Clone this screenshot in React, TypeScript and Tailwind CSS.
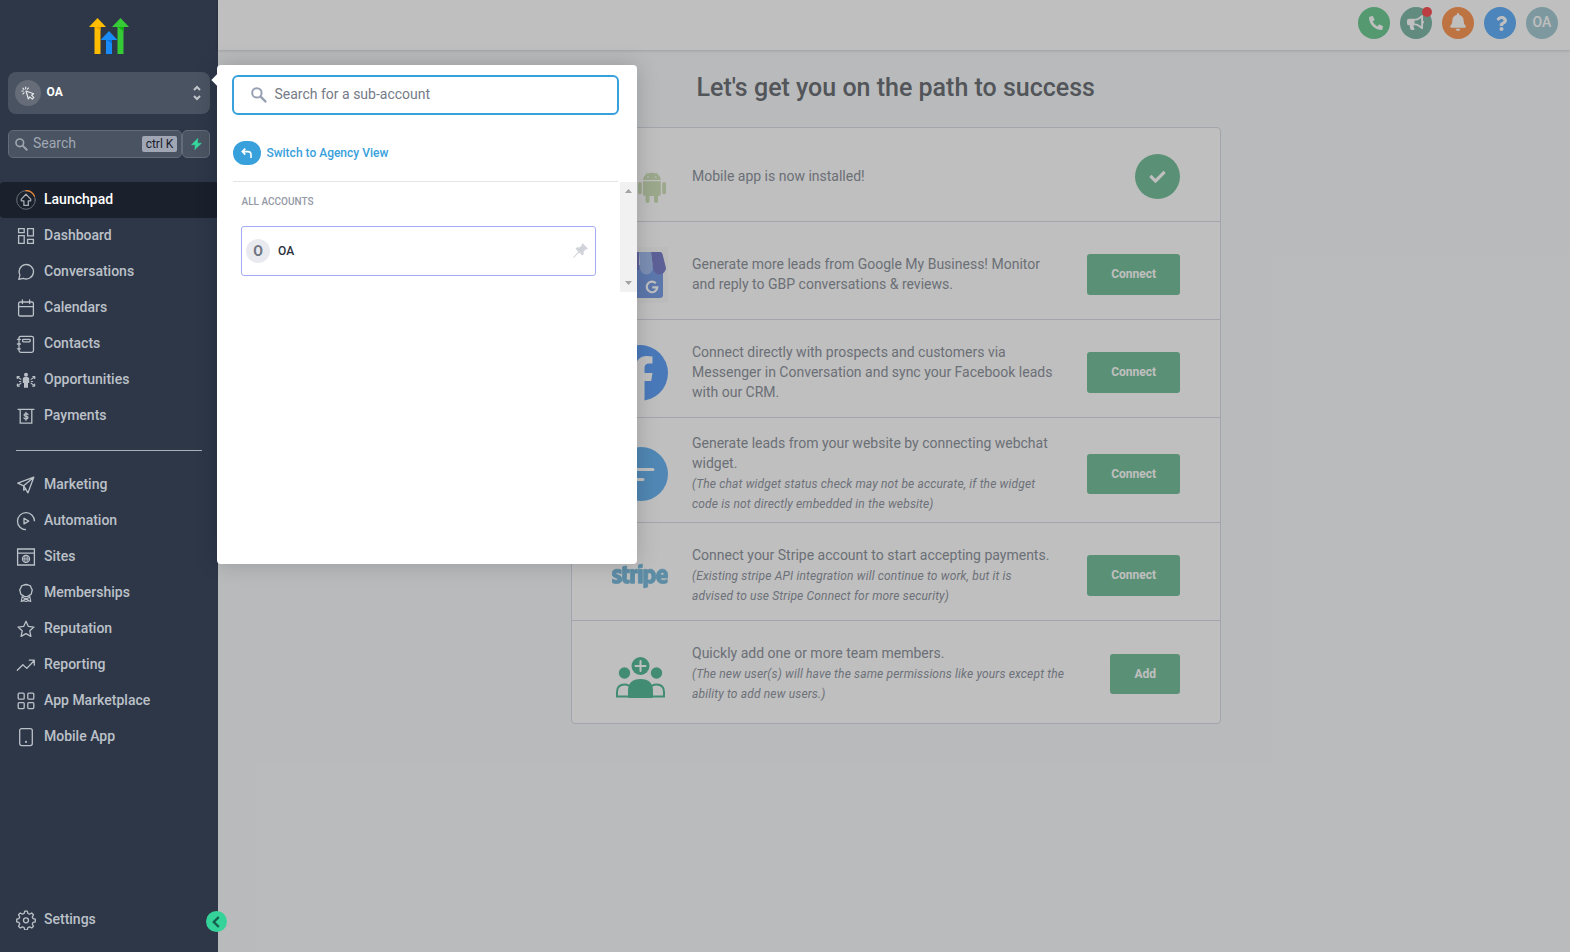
import React from "react";
import {
  FaPhoneAlt,
  FaBell,
  FaBullhorn,
  FaQuestion,
  FaCheck,
  FaStripe,
  FaApple,
} from "react-icons/fa";

const stroke = {
  fill: "none",
  stroke: "currentColor",
  strokeWidth: 1.3,
  strokeLinecap: "round" as const,
  strokeLinejoin: "round" as const,
};

function Icon({ children }: { children: React.ReactNode }) {
  return (
    <svg className="block h-5 w-5 shrink-0" viewBox="0 0 20 20" {...stroke}>
      {children}
    </svg>
  );
}

const primary = [
  {
    label: "Launchpad",
    icon: (
      <Icon>
        <circle cx="10" cy="10" r="9.3" stroke="#6b7078" strokeWidth="1" />
        <path d="M10 .7a9.3 9.3 0 0 1 8.4 5.4" stroke="#ed8936" />
        <path d="M10 4.3l4.7 4.8v1.7h-2.4v4.6H7.9v-4.6H5.3V9.1z" />
      </Icon>
    ),
  },
  {
    label: "Dashboard",
    icon: (
      <Icon>
        <g strokeLinejoin="miter">
          <path d="M2.600 2.600h5.600v4H2.600zM2.600 9.600h5.600v7.800H2.600zM11.600 2.600h5.800v7.200h-5.800zM11.600 13.300h5.800v4.100h-5.800z" />
        </g>
      </Icon>
    ),
  },
  {
    label: "Conversations",
    icon: (
      <Icon>
        <path d="M2.800 17.400l1.100-4.300a7.200 7.200 0 1 1 3.400 3.200z" />
      </Icon>
    ),
  },
  {
    label: "Calendars",
    icon: (
      <Icon>
        <rect x="2.600" y="4" width="14.800" height="14" rx="1.600" />
        <path d="M2.600 8.600h14.800M6.400 2v3.600M13.600 2v3.600" />
      </Icon>
    ),
  },
  {
    label: "Contacts",
    icon: (
      <Icon>
        <rect x="3" y="2.300" width="14.500" height="16" rx="1.800" />
        <rect x="6.600" y="5.400" width="7.600" height="2.400" rx=".8" />
        <path d="M1.400 5.300h3M1.400 10h3M1.400 14.800h3" />
      </Icon>
    ),
  },
  {
    label: "Opportunities",
    icon: (
      <Icon>
        <circle cx="10" cy="4.700" r="2" fill="currentColor" stroke="none" />
        <path
          d="M6.800 8.800c0-1.200.9-1.700 3.200-1.700s3.200.5 3.200 1.700v4.200h-1.200v4.700H8v-4.700H6.800z"
          fill="currentColor"
          stroke="none"
        />
        <path d="M4.900 9.300L2 7.600M4.700 11.500H3.400M4.900 13.200l-2.900 2.200M15.100 9.300L18 7.600M15.300 11.500h1.300M15.100 13.200l2.900 2.200" strokeWidth="1.100" />
        <path d="M1.300 8.300V6.700h1.800M1.500 14.300v1.800h1.800M18.700 8.300V6.700h-1.800M18.500 14.300v1.800h-1.800" strokeWidth="1.400" />
      </Icon>
    ),
  },
  {
    label: "Payments",
    icon: (
      <Icon>
        <path d="M2 3.300h16M4.200 3.500v13.700h11.600V3.500" strokeLinejoin="miter" />
        <path d="M12 8.600c-.4-.7-1.100-1-2-1-1 0-1.900.5-1.900 1.300 0 1.900 3.900.8 3.900 2.700 0 .8-.9 1.400-2 1.400-.9 0-1.700-.4-2-1.100M10 6.300v8" />
      </Icon>
    ),
  },
];

const secondary = [
  {
    label: "Marketing",
    icon: (
      <Icon>
        <path d="M17.800 2.200L1.800 8.200l5.900 2.600 4.300 7zM17.800 2.200L7.700 10.800v4.400l2.100-1.400" />
      </Icon>
    ),
  },
  {
    label: "Automation",
    icon: (
      <Icon>
        <path d="M18.500 10.300a8.500 8.500 0 1 0-8.500 8.400" strokeLinecap="butt" />
        <path d="M8 7.300v5.600l4.700-2.800z" />
      </Icon>
    ),
  },
  {
    label: "Sites",
    icon: (
      <Icon>
        <g strokeLinejoin="miter">
          <path d="M1.600 2h16.800v16H1.600zM1.600 6.100h16.800" />
        </g>
        <circle cx="10" cy="11.900" r="3.500" />
        <path d="M6.500 11.900h7M10 8.400v7M8.300 9.200v5.400M11.700 9.200v5.400" strokeWidth=".8" />
      </Icon>
    ),
  },
  {
    label: "Memberships",
    icon: (
      <Icon>
        <path d="M10 1.500l2.200.5 2.200.8.700 2.100 1.200 1.900-.6 2.200-.5 2.200-1.900 1.200-1.500 1-1.800.3-1.800-.3-1.500-1-1.900-1.200-.5-2.200-.6-2.200 1.200-1.900.7-2.100L7.800 2z" />
        <path d="M6.300 12.800l-1.100 5.700 2.600-.8 2.200.8 2.200-.8 2.600.8-1.100-5.700M6.300 14.300l6.900 3.200M13.700 14.300l-6.900 3.200" strokeWidth="1.100" />
      </Icon>
    ),
  },
  {
    label: "Reputation",
    icon: (
      <Icon>
        <path d="M10 2.300l2.350 5.100 5.600.65-4.150 3.800 1.100 5.500L10 14.600l-4.900 2.750 1.100-5.500-4.150-3.800 5.600-.65z" />
      </Icon>
    ),
  },
  {
    label: "Reporting",
    icon: (
      <Icon>
        <path d="M1.300 15.300l5.600-5.600 3.900 3.700 7.500-7.900M13.300 5.200h5v5" />
      </Icon>
    ),
  },
  {
    label: "App Marketplace",
    icon: (
      <Icon>
        <rect x="2.200" y="2.200" width="6" height="6" rx="1" />
        <rect x="11.800" y="2.200" width="6" height="6" rx="1" />
        <rect x="2.200" y="11.600" width="6" height="6" rx="1" />
        <rect x="11.800" y="11.600" width="6" height="6" rx="1" />
      </Icon>
    ),
  },
  {
    label: "Mobile App",
    icon: (
      <Icon>
        <rect x="3.700" y="1.600" width="12.600" height="17" rx="2" />
        <path d="M10 14.700v.3" strokeWidth="2" />
      </Icon>
    ),
  },
];

function NavItem({ label, icon, active }: { label: string; icon: React.ReactNode; active?: boolean }) {
  return (
    <a
      className={
        active
          ? "flex h-9 items-center gap-2 rounded bg-[#1a202c] pl-4 text-sm font-medium text-white"
          : "flex h-9 items-center gap-2 pl-4 text-sm font-medium text-[#bcc1c8]"
      }
    >
      <span className={active ? "text-[#a9adb3]" : "text-[#bcc1c8]"}>{icon}</span>
      <span className="-mt-0.5">{label}</span>
    </a>
  );
}

function Magnifier({ className }: { className: string }) {
  return (
    <svg className={className} viewBox="0 0 16 16" fill="none" stroke="currentColor" strokeWidth="2">
      <circle cx="5.900" cy="5.900" r="4.700" />
      <path d="M9.400 9.400l5.700 5.700" strokeWidth="2.300" />
    </svg>
  );
}

function Sidebar() {
  return (
    <aside className="flex h-full w-[218px] shrink-0 flex-col bg-[#2d3748]">
      <svg className="ml-[89px] mt-[18px] block h-9 w-10" viewBox="0 0 40 36">
        <path d="M5.500 8h6v28h-6z" fill="#ffbc00" />
        <path d="M28.500 8h6v28h-6z" fill="#37ca37" />
        <path d="M17 21h6v15h-6z" fill="#188bf6" />
        <path d="M5.500 8.500h6v4z" fill="#e8a302" />
        <path d="M28.500 8.500h6v5z" fill="#10b210" />
        <path d="M17 21.500h6v4z" fill="#0870df" />
        <path d="M8.500 0l8.500 9H0z" fill="#ffbc00" />
        <path d="M31.500 0l8.500 9H23z" fill="#37ca37" />
        <path d="M20 13l8.500 9h-17z" fill="#188bf6" />
      </svg>

      <div className="ml-2 mt-[18px] flex h-[42px] w-[202px] items-center rounded-lg bg-[#4a5361] pl-[7px] pr-[9px]">
        <span className="flex h-[26px] w-[26px] items-center justify-center rounded-full bg-[#666d78] text-[#e6e8ea]">
          <svg className="h-3.5 w-3.5" viewBox="0 0 14 14" fill="none" stroke="currentColor" strokeWidth="1.200" strokeLinejoin="round" strokeLinecap="round">
            <path d="M5 5l7.600 2.700-2 1.500 2.200 2.200-1.500 1.700-2.500-2.200-1.500 2z" />
            <path d="M4.700 2.800V1.200M2.900 3.300l-1-1.200M2.300 5H.8M3 6.800L2 7.900M6.500 3.200l.9-1.200" />
          </svg>
        </span>
        <span className="-mt-0.5 ml-[5.5px] text-xs font-bold text-white">OA</span>
        <svg className="ml-auto h-4 w-2" viewBox="0 0 8 16" fill="none" stroke="#c3c7cc" strokeWidth="2">
          <path d="M1 5l3-3 3 3M1 11l3 3 3-3" />
        </svg>
      </div>

      <div className="ml-2 mt-4 flex h-7 w-[202px]">
        <div className="flex w-[174px] items-center rounded-[5px] border border-[#636b78] bg-[#4a5361] pl-1.5 pr-1">
          <Magnifier className="h-[13px] w-[13px] text-[#a0a6b0]" />
          <span className="-mt-0.5 ml-[5px] text-sm text-[#a0a8b4]">Search</span>
          <span className="ml-auto flex h-4 w-[35px] items-center justify-center rounded-[2px] bg-[#a0a6b4] text-xs text-[#1a202c]">
            ctrl K
          </span>
        </div>
        <div className="flex w-7 items-center justify-center rounded-[5px] border border-[#636b78] bg-[#4a5361]">
          <svg className="h-3 w-[11px]" viewBox="0 0 11 12" fill="#37d99e" stroke="#37d99e" strokeWidth=".6">
            <path d="M6.800.4L.6 6.800h3.800L3.800 11.600l6.600-6.400H6.500z" />
          </svg>
        </div>
      </div>

      <nav className="mt-6">
        {primary.map((item, i) => (
          <NavItem key={item.label} {...item} active={i === 0} />
        ))}
      </nav>
      <div className="ml-4 mt-4 h-px w-[186px] shrink-0 bg-[#a9afb9]" />
      <nav className="mt-4">
        {secondary.map((item) => (
          <NavItem key={item.label} {...item} />
        ))}
      </nav>
      <div className="mb-[14px] mt-auto">
        <NavItem
          label="Settings"
          icon={
            <Icon>
              <path d="M8.700 1.200h2.600l.6 2.300 1.700.7 2.100-1.200 1.800 1.800-1.200 2.100.7 1.700 2.300.6v2.600l-2.300.6-.7 1.700 1.200 2.100-1.800 1.800-2.100-1.200-1.700.7-.6 2.300H8.700l-.6-2.300-1.700-.7-2.100 1.200-1.800-1.800 1.200-2.100-.7-1.700-2.300-.6V9.200l2.300-.6.7-1.700-1.200-2.100L4.300 3l2.100 1.200 1.700-.7z" />
              <circle cx="10" cy="10.300" r="2.500" />
            </Icon>
          }
        />
      </div>
    </aside>
  );
}

function Header() {
  const circle = "relative flex h-8 w-8 items-center justify-center rounded-full text-white";
  return (
    <header className="flex h-[50px] shrink-0 justify-end gap-2.5 bg-white pr-3 pt-[7px] shadow-[0_1px_3px_rgba(0,0,0,0.15)]">
      <div className={circle + " bg-[#70cc95]"}>
        <FaPhoneAlt className="ml-1 h-3.5 w-3.5" />
      </div>
      <div className={circle + " bg-[#80baa8]"}>
        <FaBullhorn className="mb-px mr-px h-[17px] w-[17px]" />
        <span className="absolute right-0 top-0 h-2.5 w-2.5 rounded-full bg-[#fa5558]" />
      </div>
      <div className={circle + " bg-[#fd9a58]"}>
        <FaBell className="mb-0.5 h-[18px] w-4" />
      </div>
      <div className={circle + " bg-[#66b1fb]"}>
        <FaQuestion className="ml-0.5 h-[15px] w-[15px]" />
      </div>
      <div className={circle + " bg-[#a7cdd5] text-sm font-medium text-[#eef4f5]"}>
        <span className="-mt-0.5">OA</span>
      </div>
    </header>
  );
}

function Row({
  icon,
  height,
  action,
  children,
}: {
  icon: React.ReactNode;
  height: string;
  action: React.ReactNode;
  children: React.ReactNode;
}) {
  return (
    <div className={"flex items-center border-b border-[#d8dde6] pl-10 pr-10 last:border-b-0 " + height}>
      <div className="mt-0.5 flex h-14 w-14 shrink-0 items-center justify-center">{icon}</div>
      <div className="ml-6 whitespace-nowrap text-sm leading-5 text-[#8f959e]">{children}</div>
      <div className="ml-auto">{action}</div>
    </div>
  );
}

function Note({ children }: { children: React.ReactNode }) {
  return <p className="mt-px text-xs italic leading-5 tracking-[0.16px] text-[#9297a3]">{children}</p>;
}

function Button({ children, size = "h-[41px]" }: { children: React.ReactNode; size?: string }) {
  return (
    <button className={"block rounded-[3px] bg-[#79c19c] px-6 text-xs font-bold text-white " + size}>
      {children}
    </button>
  );
}

function Checklist() {
  return (
    <div className="ml-[353px] mt-[21px] w-[650px] overflow-hidden rounded border border-[#d8dde6] bg-white">
      <Row
        height="h-[94px] pt-[3px]"
        icon={
          <div className="flex h-14 w-14 items-start">
            <FaApple className="-ml-px mr-px h-[38px] w-[26px] shrink-0 text-[#8b8b8b]" />
            <svg className="mt-[23px] h-[31px] w-7 shrink-0" viewBox="0 0 28 31" fill="#cfe0bb">
              <path d="M5 8q.3-4.300 4-6.200L7.700.2l.3-.2 1.500 1.600a11 11 0 0 1 8.800 0L19.700 0l.3.2-1.200 1.600q3.700 2 4 6.200z" />
              <path d="M5 9.200h17.800V22q0 2-2 2H20v5a2 2 0 0 1-4 0v-5h-4.500v5a2 2 0 0 1-4 0v-5H7q-2 0-2-2z" />
              <rect y="10" width="3.800" height="12.300" rx="1.900" />
              <rect x="24.200" y="10" width="3.800" height="12.300" rx="1.900" />
              <circle cx="10" cy="5" r=".8" fill="#fff" />
              <circle cx="17.800" cy="5" r=".8" fill="#fff" />
            </svg>
          </div>
        }
        action={
          <div className="flex h-[45px] w-[45px] items-center justify-center rounded-full bg-[#79c19c] text-white">
            <FaCheck className="mt-0.5 h-4 w-[17px]" />
          </div>
        }
      >
        Mobile app is now installed!
      </Row>
      <Row
        height="h-[98px] pt-[7px]"
        icon={
          <svg className="h-14 w-14 bg-[#fafafa]" viewBox="0 0 56 56">
            <path d="M5 18h46v30a3 3 0 0 1-3 3H8a3 3 0 0 1-3-3z" fill="#7b9fe6" />
            <path d="M7 5h10l-2 18H2z" fill="#a4bff0" />
            <path d="M17 5h10v18H14z" fill="#7d80c9" />
            <path d="M27 5h12l2 16a6.500 6.500 0 0 1-13 0z" fill="#a4bff0" />
            <path d="M39 5h9q2 0 2.500 2L54 21a6.500 6.500 0 0 1-13 0z" fill="#7d80c9" />
            <path d="M43.800 36.200a5.300 5.300 0 1 0 1.500 4.100h-5" fill="none" stroke="#fff" strokeWidth="2.200" />
          </svg>
        }
        action={<Button>Connect</Button>}
      >
        Generate more leads from Google My Business! Monitor
        <br />
        and reply to GBP conversations &amp; reviews.
      </Row>
      <Row
        height="h-[98px] pt-[7px]"
        icon={
          <svg className="h-14 w-14" viewBox="0 0 56 56">
            <circle cx="28" cy="28" r="28" fill="#63a2f8" />
            <path
              d="M24 56V36h-7v-8h7v-6c0-7 4-11 10.500-11q3 0 6 .5v7H37q-4.500 0-4.500 4.500v5h8l-1.300 8h-6.700v20z"
              fill="#fff"
            />
          </svg>
        }
        action={<Button>Connect</Button>}
      >
        Connect directly with prospects and customers via
        <br />
        Messenger in Conversation and sync your Facebook leads
        <br />
        with our CRM.
      </Row>
      <Row
        height="h-[105px] pt-[7px]"
        icon={
          <svg className="mb-px ml-px h-[54px] w-[54px] shrink-0" viewBox="0 0 54 54">
            <circle cx="27" cy="27" r="27" fill="#6bb5f0" />
            <path d="M14 22.500h25M14 32.500h15" stroke="#fff" strokeWidth="3" strokeLinecap="round" />
          </svg>
        }
        action={<Button size="h-10">Connect</Button>}
      >
        Generate leads from your website by connecting webchat
        <br />
        widget.
        <Note>
          (The chat widget status check may not be accurate, if the widget
          <br />
          code is not directly embedded in the website)
        </Note>
      </Row>
      <Row
        height="h-[98px] pt-[7px]"
        icon={
          <FaStripe
            className="h-[46px] w-14 shrink-0 text-[#7cbbdc]"
            preserveAspectRatio="none"
            stroke="currentColor"
            strokeWidth="10"
          />
        }
        action={<Button>Connect</Button>}
      >
        Connect your Stripe account to start accepting payments.
        <Note>
          (Existing stripe API integration will continue to work, but it is
          <br />
          advised to use Stripe Connect for more security)
        </Note>
      </Row>
      <Row
        height="h-[102px] pt-[3px]"
        icon={
          <svg className="mt-[5px] h-[41px] w-[49px]" viewBox="0 0 49 41" fill="#58bb9a">
            <circle cx="24.500" cy="9" r="9" />
            <path d="M24.500 4v10M19.500 9h10" stroke="#fff" strokeWidth="2" strokeLinecap="round" />
            <circle cx="8.500" cy="16" r="5.700" />
            <circle cx="40.500" cy="16" r="5.700" />
            <path d="M1 39.500V35q0-7.500 7.500-7.500 5 0 6.500 4v8zM48 39.500V35q0-7.500-7.500-7.500-5 0-6.500 4v8z" fill="none" stroke="#58bb9a" strokeWidth="2" />
            <path d="M12 40v-6q0-12 12.500-12T37 34v6q0 1-1 1H13q-1 0-1-1z" />
          </svg>
        }
        action={<Button size="h-10">Add</Button>}
      >
        Quickly add one or more team members.
        <Note>
          (The new user(s) will have the same permissions like yours except the
          <br />
          ability to add new users.)
        </Note>
      </Row>
    </div>
  );
}

function AccountSwitcher() {
  return (
    <div className="absolute left-[217px] top-[65px] h-[499px] w-[420px] rounded bg-white pl-[15px] pt-2.5 shadow-[0_0_22px_rgba(0,0,0,0.18)]">
      <span className="absolute -left-1 top-[11px] h-2 w-2 rotate-45 bg-white" />
      <div className="flex h-10 w-[387px] items-center rounded-md border-2 border-[#38a1db] pl-[17px]">
        <Magnifier className="h-4 w-4 text-[#98a1b3]" />
        <span className="-mt-0.5 ml-[7.5px] text-sm text-[#757b87]">Search for a sub-account</span>
      </div>
      <div className="ml-[1.4px] mt-[26px] flex h-6 items-center">
        <span className="flex h-6 w-7 items-center justify-center rounded-xl bg-[#38a1db]">
          <svg className="h-2.5 w-3" viewBox="0 0 12 10" fill="none" stroke="#fff" strokeWidth="1.600">
            <path d="M4.300.6L1.300 3.600l3 3M1.300 3.600H7q3 0 3 3V10" />
          </svg>
        </span>
        <span className="ml-[5px] text-xs font-medium text-[#38a1db]">Switch to Agency View</span>
      </div>
      <div className="ml-px mt-4 h-px w-[385px] bg-[#e3e4e6]" />
      <div className="flex">
        <div className="ml-[9px] w-[355px] shrink-0">
          <p className="mt-[13px] pl-[0.5px] text-[10px] font-medium leading-[14px] text-[#9499a6]">ALL ACCOUNTS</p>
          <div className="mt-[17px] flex h-[50px] items-center rounded-[3px] border border-[#a3acf5] pl-1 pr-[7px]">
            <span className="flex h-6 w-6 items-center justify-center rounded-full bg-[#e9eaef] text-sm font-bold text-[#6f7583]">
              O
            </span>
            <span className="ml-2 text-xs font-medium text-[#2b303b]">OA</span>
            <svg className="-mt-0.5 ml-auto h-[15px] w-[15px]" viewBox="0 0 15 15" fill="#d1d3da">
              <path d="M9.500.2l5.300 5.300-1.100.9-.9-.2-2.300 2.500.3 2.300-1.400 1.400-3.200-3L.6 15 0 14.400l5.300-5.700-2.700-3L4 4.300l2.400.2 2.500-2.300-.2-1z" />
            </svg>
          </div>
        </div>
        <div className="ml-6 flex h-[110px] w-[17px] shrink-0 flex-col items-center justify-between bg-[#f1f1f1] py-[7px]">
          <svg className="h-1 w-[7px]" viewBox="0 0 7 4" fill="#a3a3a3">
            <path d="M3.500 0L7 4H0z" />
          </svg>
          <svg className="h-1 w-[7px]" viewBox="0 0 7 4" fill="#a3a3a3">
            <path d="M3.500 4L7 0H0z" />
          </svg>
        </div>
      </div>
    </div>
  );
}

export default function App() {
  return (
    <div className="relative flex h-[952px] w-[1570px] overflow-hidden font-['Roboto',sans-serif]">
      <Sidebar />
      <main className="relative flex min-w-0 flex-1 flex-col bg-[#f7f9fb]">
        <Header />
        <h1 className="ml-[478.5px] mt-5 text-[25px] font-medium leading-9 text-[#6e7277]">
          Let's get you on the path to success
        </h1>
        <Checklist />
        <div className="absolute inset-0 bg-black/25" />
      </main>
      <AccountSwitcher />
      <button className="absolute left-[206px] top-[911px] flex h-[21px] w-[21px] items-center justify-center rounded-full bg-[#34d399] pr-0.5">
        <svg className="h-3 w-2" viewBox="0 0 8 12" fill="none" stroke="#155e4d" strokeWidth="2.400">
          <path d="M6.800 1L1.800 6l5 5" />
        </svg>
      </button>
    </div>
  );
}
